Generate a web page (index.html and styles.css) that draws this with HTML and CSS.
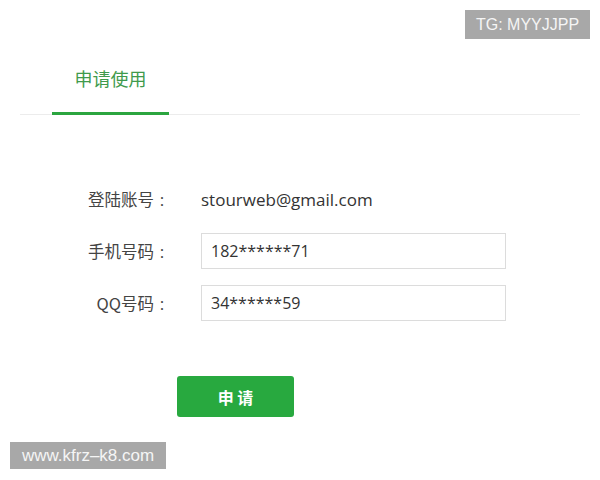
FILE: index.html
```html
<!DOCTYPE html>
<html lang="zh-CN">
<head>
<meta charset="utf-8">
<title>申请使用</title>
<link rel="stylesheet" href="styles.css">
</head>
<body>
<div class="page">
  <div class="tabs">
    <div class="tab active">申请使用</div>
  </div>
  <div class="form">
    <div class="row">
      <div class="label">登陆账号<span class="colon">:</span></div>
      <div class="value">stourweb@gmail.com</div>
    </div>
    <div class="row">
      <div class="label">手机号码<span class="colon">:</span></div>
      <div class="input">182******71</div>
    </div>
    <div class="row">
      <div class="label">QQ号码<span class="colon">:</span></div>
      <div class="input">34******59</div>
    </div>
    <div class="actions">
      <button class="btn">申 请</button>
    </div>
  </div>
  <div class="badge">TG: MYYJJPP</div>
  <div class="watermark">www.kfrz–k8.com</div>
</div>
</body>
</html>
```

FILE: styles.css
```css
html, body {
  margin: 0;
  padding: 0;
  background: #ffffff;
}
.page {
  position: relative;
  width: 600px;
  height: 480px;
  font-family: "Open Sans", "Noto Sans CJK SC", sans-serif;
  color: #333333;
}
.tabs {
  margin: 0 20px;
  padding-top: 64px;
  border-bottom: 1px solid #ececec;
  display: flex;
}
.tab {
  margin-left: 32px;
  width: 117px;
  text-align: center;
  font-family: "Noto Sans CJK SC", sans-serif;
  font-size: 18px;
  line-height: 28px;
  padding-bottom: 20px;
  color: #3f9a4c;
  border-bottom: 3px solid #2ba53f;
  margin-bottom: -1px;
}
.form {
  padding-top: 66px;
  padding-left: 20px;
  display: flex;
  flex-direction: column;
  gap: 16px;
}
.row {
  display: flex;
  align-items: center;
  height: 36px;
  gap: 29px;
}
.label {
  width: 152px;
  text-align: right;
  font-family: "Noto Sans CJK SC", sans-serif;
  font-size: 16.5px;
  color: #444444;
}
.colon {
  display: inline-block;
  width: 16px;
  margin-right: 2px;
  text-align: center;
  font-family: "Open Sans", sans-serif;
  font-size: 17px;
}
.value {
  font-size: 17px;
  color: #333333;
}
.input {
  box-sizing: border-box;
  width: 305px;
  height: 36px;
  border: 1px solid #dcdcdc;
  padding: 0 9px;
  font-size: 16px;
  line-height: 34px;
  color: #333333;
}
.actions {
  margin-top: 39px;
  padding-left: 157px;
}
.btn {
  width: 117px;
  height: 41px;
  border: 0;
  border-radius: 3px;
  background: #28a93f;
  color: #ffffff;
  font-family: "Noto Sans CJK SC", sans-serif;
  font-size: 16px;
  font-weight: bold;
  padding: 0;
}
.badge {
  position: absolute;
  top: 10px;
  right: 10px;
  width: 125px;
  height: 29px;
  line-height: 29px;
  text-align: center;
  background: #a8a8a8;
  color: #f5f5f5;
  font-family: "Liberation Sans", sans-serif;
  font-size: 16px;
}
.watermark {
  position: absolute;
  left: 10px;
  top: 442px;
  width: 156px;
  height: 27px;
  line-height: 27px;
  text-align: center;
  background: #a8a8a8;
  color: #f5f5f5;
  font-family: "Liberation Sans", sans-serif;
  font-size: 17px;
}
```
